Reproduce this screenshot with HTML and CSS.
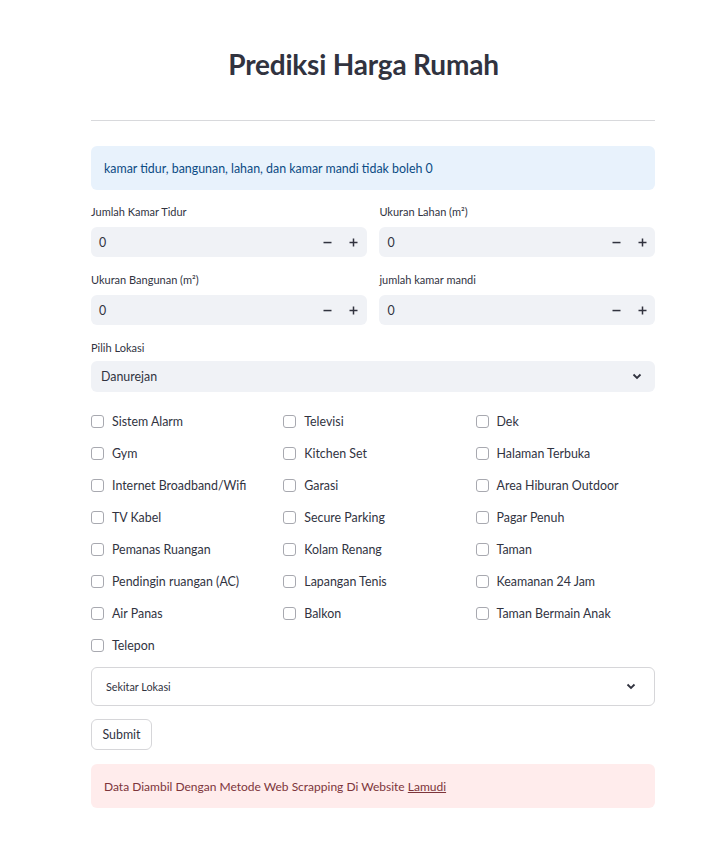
FILE: index.html
```html
<!DOCTYPE html>
<html lang="id">
<head>
<meta charset="utf-8">
<title>Prediksi Harga Rumah</title>
<link rel="stylesheet" href="styles.css">
</head>
<body>
<main class="main">
  <h1 class="title">Prediksi Harga Rumah</h1>
  <hr class="divider">
  <div class="alert alert-info">kamar tidur, bangunan, lahan, dan kamar mandi tidak boleh 0</div>

  <div class="grid-2">
    <div class="field">
      <label class="label">Jumlah Kamar Tidur</label>
      <div class="num-input">
        <span class="num-value">0</span>
        <button class="step">
          <svg width="9" height="9" viewBox="0 0 9 9"><rect x="0.5" y="3.8" width="8" height="1.5" fill="#31333f"/></svg>
        </button>
        <button class="step">
          <svg width="9" height="9" viewBox="0 0 9 9"><rect x="0.5" y="3.75" width="8" height="1.5" fill="#31333f"/><rect x="3.75" y="0.5" width="1.5" height="8" fill="#31333f"/></svg>
        </button>
      </div>
    </div>
    <div class="field">
      <label class="label">Ukuran Lahan (m²)</label>
      <div class="num-input">
        <span class="num-value">0</span>
        <button class="step">
          <svg width="9" height="9" viewBox="0 0 9 9"><rect x="0.5" y="3.8" width="8" height="1.5" fill="#31333f"/></svg>
        </button>
        <button class="step">
          <svg width="9" height="9" viewBox="0 0 9 9"><rect x="0.5" y="3.75" width="8" height="1.5" fill="#31333f"/><rect x="3.75" y="0.5" width="1.5" height="8" fill="#31333f"/></svg>
        </button>
      </div>
    </div>
    <div class="field">
      <label class="label">Ukuran Bangunan (m²)</label>
      <div class="num-input">
        <span class="num-value">0</span>
        <button class="step">
          <svg width="9" height="9" viewBox="0 0 9 9"><rect x="0.5" y="3.8" width="8" height="1.5" fill="#31333f"/></svg>
        </button>
        <button class="step">
          <svg width="9" height="9" viewBox="0 0 9 9"><rect x="0.5" y="3.75" width="8" height="1.5" fill="#31333f"/><rect x="3.75" y="0.5" width="1.5" height="8" fill="#31333f"/></svg>
        </button>
      </div>
    </div>
    <div class="field">
      <label class="label">jumlah kamar mandi</label>
      <div class="num-input">
        <span class="num-value">0</span>
        <button class="step">
          <svg width="9" height="9" viewBox="0 0 9 9"><rect x="0.5" y="3.8" width="8" height="1.5" fill="#31333f"/></svg>
        </button>
        <button class="step">
          <svg width="9" height="9" viewBox="0 0 9 9"><rect x="0.5" y="3.75" width="8" height="1.5" fill="#31333f"/><rect x="3.75" y="0.5" width="1.5" height="8" fill="#31333f"/></svg>
        </button>
      </div>
    </div>
  </div>

  <div class="field field-select">
    <label class="label">Pilih Lokasi</label>
    <div class="select">
      <span>Danurejan</span>
      <svg class="chev" width="10" height="7" viewBox="0 0 10 7"><path d="M1.5 1.5 L5 5 L8.5 1.5" fill="none" stroke="#31333f" stroke-width="1.8"/></svg>
    </div>
  </div>

  <div class="grid-3">
    <div class="col">
      <div class="check"><span class="box"></span>Sistem Alarm</div>
      <div class="check"><span class="box"></span>Gym</div>
      <div class="check"><span class="box"></span>Internet Broadband/Wifi</div>
      <div class="check"><span class="box"></span>TV Kabel</div>
      <div class="check"><span class="box"></span>Pemanas Ruangan</div>
      <div class="check"><span class="box"></span>Pendingin ruangan (AC)</div>
      <div class="check"><span class="box"></span>Air Panas</div>
      <div class="check"><span class="box"></span>Telepon</div>
    </div>
    <div class="col">
      <div class="check"><span class="box"></span>Televisi</div>
      <div class="check"><span class="box"></span>Kitchen Set</div>
      <div class="check"><span class="box"></span>Garasi</div>
      <div class="check"><span class="box"></span>Secure Parking</div>
      <div class="check"><span class="box"></span>Kolam Renang</div>
      <div class="check"><span class="box"></span>Lapangan Tenis</div>
      <div class="check"><span class="box"></span>Balkon</div>
    </div>
    <div class="col">
      <div class="check"><span class="box"></span>Dek</div>
      <div class="check"><span class="box"></span>Halaman Terbuka</div>
      <div class="check"><span class="box"></span>Area Hiburan Outdoor</div>
      <div class="check"><span class="box"></span>Pagar Penuh</div>
      <div class="check"><span class="box"></span>Taman</div>
      <div class="check"><span class="box"></span>Keamanan 24 Jam</div>
      <div class="check"><span class="box"></span>Taman Bermain Anak</div>
    </div>
  </div>

  <div class="expander">
    <span>Sekitar Lokasi</span>
    <svg class="chev" width="10" height="7" viewBox="0 0 10 7"><path d="M1.5 1.5 L5 5 L8.5 1.5" fill="none" stroke="#31333f" stroke-width="1.8"/></svg>
  </div>

  <div class="actions">
    <button class="btn">Submit</button>
  </div>

  <div class="alert alert-error"><span>Data Diambil Dengan Metode Web Scrapping Di Website <a href="#" class="link">Lamudi</a></span></div>
</main>
</body>
</html>
```
FILE: styles.css
```css
* { box-sizing: border-box; }
html, body { margin: 0; padding: 0; background: #ffffff; }
body {
  font-family: "Lato", "Liberation Sans", sans-serif;
  color: #31333f;
  font-size: 12.4px;
}
.main {
  width: 564px;
  margin-left: 91px;
  padding-top: 44px;
  padding-bottom: 40px;
  display: flex;
  flex-direction: column;
}
.title {
  margin: 0;
  font-size: 28px;
  line-height: 41px;
  font-weight: 700;
  text-align: center;
  padding-right: 19px;
  color: #31333f;
  letter-spacing: -0.2px;
}
.divider {
  margin: 35px 0 0 0;
  border: none;
  border-top: 1px solid #d8d9dc;
  height: 0;
}
.alert {
  height: 44px;
  border-radius: 6px;
  padding: 0 13px;
  display: flex;
  align-items: center;
  font-size: 12.4px;
}
.alert-info {
  margin-top: 25px;
  background: #e8f2fc;
  color: #0b4b84;
}
.alert-error {
  margin-top: 14px;
  background: #ffecec;
  color: #7d353b;
  font-size: 12px;
}
.link { color: #7d353b; text-decoration: underline; }
.grid-2 {
  margin-top: 14px;
  display: grid;
  grid-template-columns: 1fr 1fr;
  column-gap: 12.8px;
  row-gap: 15px;
}
.field { display: flex; flex-direction: column; }
.label {
  font-size: 11px;
  line-height: 16px;
  height: 16px;
  margin-bottom: 7px;
  color: #31333f;
}
.num-input {
  height: 30px;
  background: #f0f2f6;
  border-radius: 6px;
  display: flex;
  align-items: center;
  padding-left: 8px;
}
.num-value { flex: 1; font-size: 12.4px; }
.step {
  width: 26px;
  height: 30px;
  border: none;
  background: transparent;
  padding: 0;
  display: flex;
  align-items: center;
  justify-content: center;
}
.field-select { margin-top: 15px; }
.field-select .label { margin-bottom: 5px; }
.select {
  height: 31px;
  background: #f0f2f6;
  border-radius: 6px;
  display: flex;
  align-items: center;
  justify-content: space-between;
  padding: 0 13px 0 10px;
  font-size: 12.4px;
}
.grid-3 {
  margin-top: 17px;
  display: grid;
  grid-template-columns: repeat(3, 1fr);
  column-gap: 12.8px;
}
.col { display: flex; flex-direction: column; gap: 8px; }
.check {
  height: 24px;
  display: flex;
  align-items: center;
  font-size: 12.4px;
}
.box {
  width: 13px;
  height: 13px;
  border: 1px solid #a8a9b0;
  border-radius: 3px;
  margin-right: 8px;
  margin-left: 0;
  flex: none;
}
.expander {
  margin-top: 10px;
  height: 39px;
  border: 1px solid #d6d6d9;
  border-radius: 6px;
  display: flex;
  align-items: center;
  justify-content: space-between;
  padding: 0 18px 0 14px;
  font-size: 10.8px;
}
.actions { margin-top: 13px; display: flex; }
.btn {
  height: 31px;
  width: 61px;
  border: 1px solid #d6d6d9;
  border-radius: 6px;
  background: #ffffff;
  font-family: inherit;
  font-size: 12.4px;
  color: #31333f;
  padding: 0;
}
```
